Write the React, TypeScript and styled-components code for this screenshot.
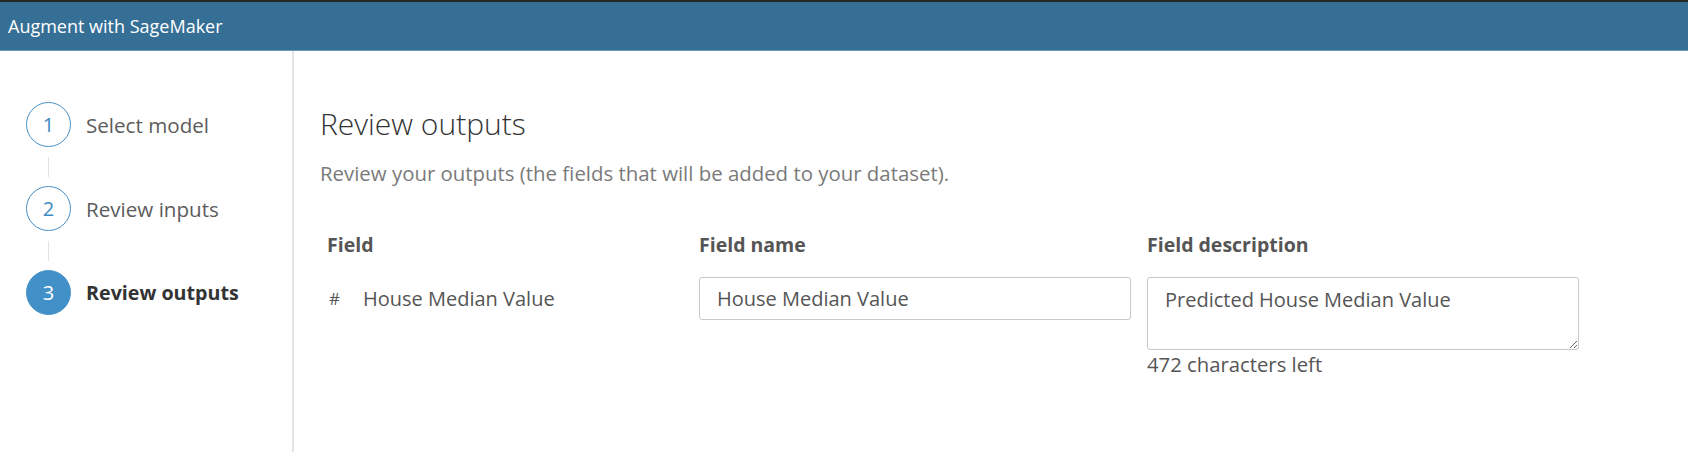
import styled, { createGlobalStyle } from "styled-components";

const GlobalStyle = createGlobalStyle`
  html, body {
    margin: 0;
    padding: 0;
    background: #ffffff;
    font-family: "Open Sans", "Noto Sans", sans-serif;
  }
  * {
    box-sizing: border-box;
  }
`;

const Page = styled.div`
  display: flex;
  flex-direction: column;
  width: 1688px;
  height: 452px;
  overflow: hidden;
`;

const Header = styled.div`
  display: flex;
  align-items: center;
  height: 51px;
  padding-left: 8px;
  background-color: #366f96;
  border-top: 2px solid #262626;
  border-bottom: 1px solid #6a9bbd;
  color: #ffffff;
  font-size: 18px;
`;

const Body = styled.div`
  display: flex;
  flex: 1;
`;

const Sidebar = styled.div`
  display: flex;
  flex-direction: column;
  width: 294px;
  padding: 51px 0 0 26px;
  border-right: 2px solid #e4e4e4;
`;

const Step = styled.div`
  display: flex;
  align-items: center;
  gap: 15px;
`;

const Circle = styled.div<{ active?: boolean }>`
  display: flex;
  align-items: center;
  justify-content: center;
  width: 45px;
  height: 45px;
  border-radius: 50%;
  border: 1.5px solid #4793c9;
  background-color: ${(p) => (p.active ? "#4290c8" : "#ffffff")};
  color: ${(p) => (p.active ? "#ffffff" : "#3d8bc3")};
  font-size: 20px;
`;

const StepLabel = styled.div<{ active?: boolean }>`
  font-size: ${(p) => (p.active ? "19.7px" : "20.6px")};
  color: ${(p) => (p.active ? "#333333" : "#5c5c5c")};
  font-weight: ${(p) => (p.active ? 700 : 400)};
`;

const Connector = styled.div`
  width: 1px;
  height: 20px;
  margin: 10px 0 9px 22px;
  background-color: #e2e2e2;
`;

const Main = styled.div`
  display: flex;
  flex-direction: column;
  padding: 53px 0 0 26px;
`;

const Title = styled.h2`
  margin: 0;
  font-size: 30px;
  font-weight: 300;
  color: #333333;
  line-height: 40px;
`;

const Subtitle = styled.p`
  margin: 15px 0 0;
  font-size: 20.4px;
  line-height: 28px;
  color: #7a7a7a;
`;

const Table = styled.div`
  display: grid;
  grid-template-columns: 372px 448px 432px;
  margin: 44px 0 0 7px;
  row-gap: 18px;
`;

const ColHead = styled.div`
  font-size: 19.5px;
  font-weight: 700;
  color: #555555;
  line-height: 28px;
`;

const FieldCell = styled.div`
  display: flex;
  align-items: center;
  height: 43px;
  gap: 23px;
  font-size: 20px;
  color: #555555;
`;

const Hash = styled.span`
  font-size: 17px;
  color: #555555;
  padding-left: 2px;
`;

const TextInput = styled.input`
  width: 432px;
  height: 43px;
  padding: 0 17px;
  border: 1px solid #c8c8c8;
  border-radius: 3px;
  font-family: inherit;
  font-size: 20px;
  color: #555555;
  outline: none;
`;

const DescWrap = styled.div`
  display: flex;
  flex-direction: column;
`;

const TextArea = styled.textarea`
  width: 432px;
  height: 73px;
  padding: 8px 17px;
  border: 1px solid #c8c8c8;
  border-radius: 3px;
  font-family: inherit;
  font-size: 20px;
  line-height: 28px;
  color: #555555;
  resize: both;
  outline: none;
`;

const Hint = styled.div`
  font-size: 20.3px;
  line-height: 28px;
  color: #555555;
`;

const steps = ["Select model", "Review inputs", "Review outputs"];

export default function App() {
  return (
    <Page>
      <GlobalStyle />
      <Header>Augment with SageMaker</Header>
      <Body>
        <Sidebar>
          {steps.map((label, i) => {
            const active = i === steps.length - 1;
            return (
              <div key={label}>
                {i > 0 && <Connector />}
                <Step>
                  <Circle active={active}>{i + 1}</Circle>
                  <StepLabel active={active}>{label}</StepLabel>
                </Step>
              </div>
            );
          })}
        </Sidebar>
        <Main>
          <Title>Review outputs</Title>
          <Subtitle>
            Review your outputs (the fields that will be added to your dataset).
          </Subtitle>
          <Table>
            <ColHead>Field</ColHead>
            <ColHead>Field name</ColHead>
            <ColHead>Field description</ColHead>
            <FieldCell>
              <Hash>#</Hash>
              House Median Value
            </FieldCell>
            <div>
              <TextInput defaultValue="House Median Value" />
            </div>
            <DescWrap>
              <TextArea defaultValue="Predicted House Median Value" />
              <Hint>472 characters left</Hint>
            </DescWrap>
          </Table>
        </Main>
      </Body>
    </Page>
  );
}
